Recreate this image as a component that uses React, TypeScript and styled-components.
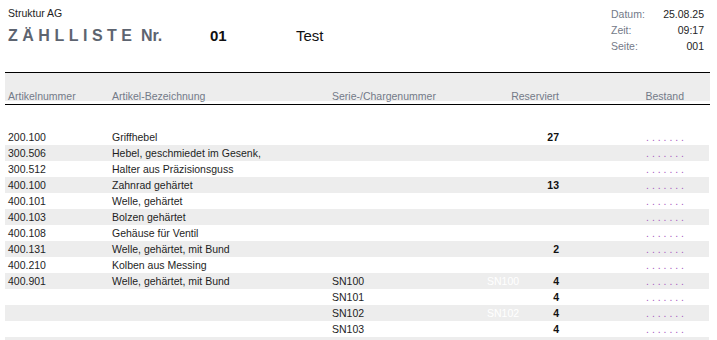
import React from "react";
import styled, { createGlobalStyle } from "styled-components";

const Global = createGlobalStyle`
  html, body { margin: 0; padding: 0; background: #fff; }
  body { font-family: "Liberation Sans", Arial, sans-serif; color: #222; }
`;

const Page = styled.div`
  width: 705px;
  margin-left: 5px;
  font-size: 10.5px;
`;

const TopHeader = styled.header`
  height: 72px;
  display: flex;
  justify-content: space-between;
  align-items: flex-start;
  padding: 0 6px 0 3px;
  box-sizing: border-box;
`;

const LeftBlock = styled.div`
  padding-top: 7px;
`;

const Company = styled.div`
  line-height: 12px;
  color: #1e1e1e;
`;

const TitleRow = styled.div`
  margin-top: 7px;
  display: grid;
  grid-template-columns: 202px 86px auto;
  align-items: baseline;
  line-height: 20px;
`;

const Title = styled.div`
  font-size: 16px;
  font-weight: bold;
  color: #5d6470;
  white-space: nowrap;
`;

const Spaced = styled.span`
  letter-spacing: 4.5px;
`;

const ListNo = styled.div`
  font-size: 15px;
  font-weight: bold;
  color: #111;
`;

const ListName = styled.div`
  font-size: 15px;
  color: #111;
`;

const InfoGrid = styled.dl`
  margin: 6px 0 0;
  display: grid;
  grid-template-columns: 50px 43px;
  line-height: 16px;
`;

const InfoLabel = styled.dt`
  color: #737a88;
`;

const InfoValue = styled.dd`
  margin: 0;
  text-align: right;
  color: #1e1e1e;
`;

const HeadWrap = styled.div`
  border-top: 1px solid #000;
  border-bottom: 1px solid #000;
  padding-bottom: 3px;
`;

const cols = "104px 220px 155px 42px 30px 125px 1fr";

const HeadBand = styled.div`
  height: 28px;
  box-sizing: border-box;
  background: #ededed;
  display: grid;
  grid-template-columns: ${cols};
  padding: 18px 0 0 3px;
  line-height: 11px;
  color: #737a88;
  white-space: nowrap;
`;

const HeadCell = styled.div<{ $right?: boolean; $span?: number }>`
  text-align: ${(p) => (p.$right ? "right" : "left")};
  grid-column: span ${(p) => p.$span ?? 1};
`;

const Body = styled.div`
  margin-top: 24px;
  width: 704px;
`;

const Row = styled.div<{ $shade: boolean }>`
  height: 16px;
  display: grid;
  grid-template-columns: ${cols};
  padding-left: 3px;
  line-height: 16px;
  background: ${(p) => (p.$shade ? "#ededed" : "#fff")};
  color: #1e1e1e;
  white-space: nowrap;
`;

const Cell = styled.div``;

const Ghost = styled.div`
  color: #fff;
`;

const Qty = styled.div`
  text-align: right;
  font-weight: bold;
  color: #111;
`;

const Dots = styled.div`
  text-align: right;
  color: #a85cc0;
`;

type Item = { nr?: string; name?: string; sn?: string; ghost?: string; qty?: string; blank?: boolean };

const items: Item[] = [
  { nr: "200.100", name: "Griffhebel", qty: "27" },
  { nr: "300.506", name: "Hebel, geschmiedet im Gesenk," },
  { nr: "300.512", name: "Halter aus Präzisionsguss" },
  { nr: "400.100", name: "Zahnrad gehärtet", qty: "13" },
  { nr: "400.101", name: "Welle, gehärtet" },
  { nr: "400.103", name: "Bolzen gehärtet" },
  { nr: "400.108", name: "Gehäuse für Ventil" },
  { nr: "400.131", name: "Welle, gehärtet, mit Bund", qty: "2" },
  { nr: "400.210", name: "Kolben aus Messing" },
  { nr: "400.901", name: "Welle, gehärtet, mit Bund", sn: "SN100", ghost: "SN100", qty: "4" },
  { sn: "SN101", ghost: "SN101", qty: "4" },
  { sn: "SN102", ghost: "SN102", qty: "4" },
  { sn: "SN103", ghost: "SN103", qty: "4" },
  { blank: true },
];

export default function App() {
  return (
    <>
      <Global />
      <Page>
        <TopHeader>
          <LeftBlock>
            <Company>Struktur AG</Company>
            <TitleRow>
              <Title>
                <Spaced>ZÄHLLISTE</Spaced> Nr.
              </Title>
              <ListNo>01</ListNo>
              <ListName>Test</ListName>
            </TitleRow>
          </LeftBlock>
          <InfoGrid>
            <InfoLabel>Datum:</InfoLabel>
            <InfoValue>25.08.25</InfoValue>
            <InfoLabel>Zeit:</InfoLabel>
            <InfoValue>09:17</InfoValue>
            <InfoLabel>Seite:</InfoLabel>
            <InfoValue>001</InfoValue>
          </InfoGrid>
        </TopHeader>
        <HeadWrap>
          <HeadBand>
            <HeadCell>Artikelnummer</HeadCell>
            <HeadCell>Artikel-Bezeichnung</HeadCell>
            <HeadCell>Serie-/Chargenummer</HeadCell>
            <HeadCell $right $span={2}>Reserviert</HeadCell>
            <HeadCell $right>Bestand</HeadCell>
          </HeadBand>
        </HeadWrap>
        <Body>
          {items.map((it, i) => (
            <Row key={i} $shade={i % 2 === 1}>
              <Cell>{it.nr}</Cell>
              <Cell>{it.name}</Cell>
              <Cell>{it.sn}</Cell>
              <Ghost>{it.ghost}</Ghost>
              <Qty>{it.qty}</Qty>
              <Dots>{it.blank ? "" : ". . . . . . ."}</Dots>
            </Row>
          ))}
        </Body>
      </Page>
    </>
  );
}
